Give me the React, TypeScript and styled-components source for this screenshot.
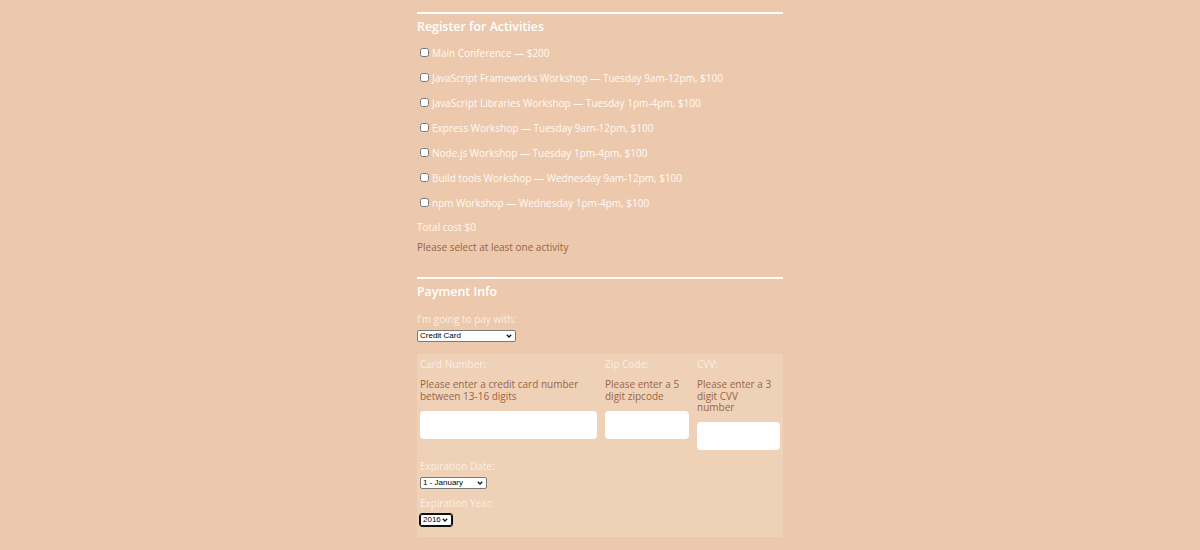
import React from "react";
import styled, { createGlobalStyle } from "styled-components";

const Global = createGlobalStyle`
  html, body { margin: 0; padding: 0; background: #ecc9ad; }
  body { font-family: "Open Sans", "Liberation Sans", sans-serif; }
`;

const Form = styled.form`
  width: 366px;
  margin: 0 auto;
  padding-top: 12px;
`;

const Section = styled.section`
  border-top: 2px solid #ffffff;
  padding-top: 3px;
  margin-bottom: 22px;
`;

const Heading = styled.h2`
  margin: 1px 0 4px;
  font-size: 12.4px;
  font-weight: 600;
  color: #ffffff;
  line-height: 18px;
`;

const ActivityRow = styled.label`
  display: flex;
  align-items: center;
  height: 25px;
  font-size: 10px;
  color: #fffaf5;
`;

const Check = styled.input`
  width: 9px;
  height: 9px;
  margin: 0 3px 0 3px;
`;

const Note = styled.p<{ $error?: boolean }>`
  margin: 0;
  height: ${(p) => (p.$error ? "16px" : "24px")};
  line-height: ${(p) => (p.$error ? "16px" : "24px")};
  font-size: 10px;
  color: ${(p) => (p.$error ? "#98633f" : "#fff7f0")};
`;

const Label = styled.label`
  display: block;
  font-size: 10px;
  color: #fbeee3;
  line-height: 14px;
`;

const SelectWrap = styled.div<{ $w: number; $focus?: boolean }>`
  position: relative;
  width: ${(p) => p.$w}px;
  height: 12px;
  margin-top: 4px;
  box-sizing: border-box;
  border: 1px solid ${(p) => (p.$focus ? "#101010" : "#7a7a7a")};
  border-radius: 2px;
  background: #fff;
  outline: ${(p) => (p.$focus ? "1px solid #101010" : "none")};
`;

const NativeSelect = styled.select`
  appearance: none;
  -webkit-appearance: none;
  display: block;
  width: 100%;
  height: 100%;
  border: none;
  background: transparent;
  font-family: "Liberation Sans", Arial, sans-serif;
  font-size: 8px;
  line-height: 10px;
  color: #000;
  padding: 0 10px 0 2px;
  margin: 0;
  outline: none;
`;

const Chevron = styled.svg`
  position: absolute;
  right: 3px;
  top: 2px;
  width: 6px;
  height: 6px;
  pointer-events: none;
`;

const PayLabelRow = styled.div`
  margin-top: 11px;
`;

const CardBox = styled.div`
  margin-top: 12px;
  background: #efd1b7;
  padding: 3px 3px 11px;
`;

const CardGrid = styled.div`
  display: grid;
  grid-template-columns: 177px 84px 83px;
  column-gap: 8px;
  align-items: start;
`;

const Field = styled.div`
  display: flex;
  flex-direction: column;
`;

const FieldHint = styled.span<{ $max?: number }>`
  font-size: 10px;
  line-height: 11.5px;
  color: #9a6646;
  margin-top: 8px;
  margin-bottom: 8.5px;
  max-width: ${(p) => (p.$max ? `${p.$max}px` : "none")};
`;

const TextInput = styled.input`
  height: 28px;
  border: none;
  border-radius: 4px;
  background: #fff;
  padding: 0 6px;
  box-sizing: border-box;
  width: 100%;
`;

const ExpGroup = styled.div`
  margin-top: 9px;
  display: flex;
  flex-direction: column;
  & + & { margin-top: 7px; }
`;

function Select({ w, focus, value, options }: { w: number; focus?: boolean; value: string; options: [string, string][] }) {
  return (
    <SelectWrap $w={w} $focus={focus}>
      <NativeSelect defaultValue={value}>
        {options.map(([v, t]) => (
          <option key={v} value={v}>{t}</option>
        ))}
      </NativeSelect>
      <Chevron viewBox="0 0 6 6">
        <path d="M0.8 1.8 L3 4 L5.2 1.8" fill="none" stroke="#111" strokeWidth="1.3" />
      </Chevron>
    </SelectWrap>
  );
}

const activities = [
  "Main Conference — $200",
  "JavaScript Frameworks Workshop — Tuesday 9am-12pm, $100",
  "JavaScript Libraries Workshop — Tuesday 1pm-4pm, $100",
  "Express Workshop — Tuesday 9am-12pm, $100",
  "Node.js Workshop — Tuesday 1pm-4pm, $100",
  "Build tools Workshop — Wednesday 9am-12pm, $100",
  "npm Workshop — Wednesday 1pm-4pm, $100",
];

export default function App() {
  return (
    <>
      <Global />
      <Form onSubmit={(e) => e.preventDefault()}>
        <Section>
          <Heading>Register for Activities</Heading>
          {activities.map((a) => (
            <ActivityRow key={a}>
              <Check type="checkbox" />
              {a}
            </ActivityRow>
          ))}
          <Note>Total cost $0</Note>
          <Note $error>Please select at least one activity</Note>
        </Section>
        <Section>
          <Heading>Payment Info</Heading>
          <PayLabelRow>
            <Label>I'm going to pay with:</Label>
            <Select
              w={99}
              value="credit"
              options={[["credit", "Credit Card"], ["paypal", "PayPal"], ["bitcoin", "Bitcoin"]]}
            />
          </PayLabelRow>
          <CardBox>
            <CardGrid>
              <Field>
                <Label>Card Number:</Label>
                <FieldHint>Please enter a credit card number between 13-16 digits</FieldHint>
                <TextInput type="text" />
              </Field>
              <Field>
                <Label>Zip Code:</Label>
                <FieldHint>Please enter a 5 digit zipcode</FieldHint>
                <TextInput type="text" />
              </Field>
              <Field>
                <Label>CVV:</Label>
                <FieldHint $max={78}>Please enter a 3 digit CVV number</FieldHint>
                <TextInput type="text" />
              </Field>
            </CardGrid>
            <ExpGroup>
              <Label>Expiration Date:</Label>
              <Select w={67} value="1" options={[["1", "1 - January"], ["2", "2 - February"], ["3", "3 - March"]]} />
            </ExpGroup>
            <ExpGroup>
              <Label>Expiration Year:</Label>
              <Select w={32} focus value="2016" options={[["2016", "2016"], ["2017", "2017"], ["2018", "2018"]]} />
            </ExpGroup>
          </CardBox>
        </Section>
      </Form>
    </>
  );
}
